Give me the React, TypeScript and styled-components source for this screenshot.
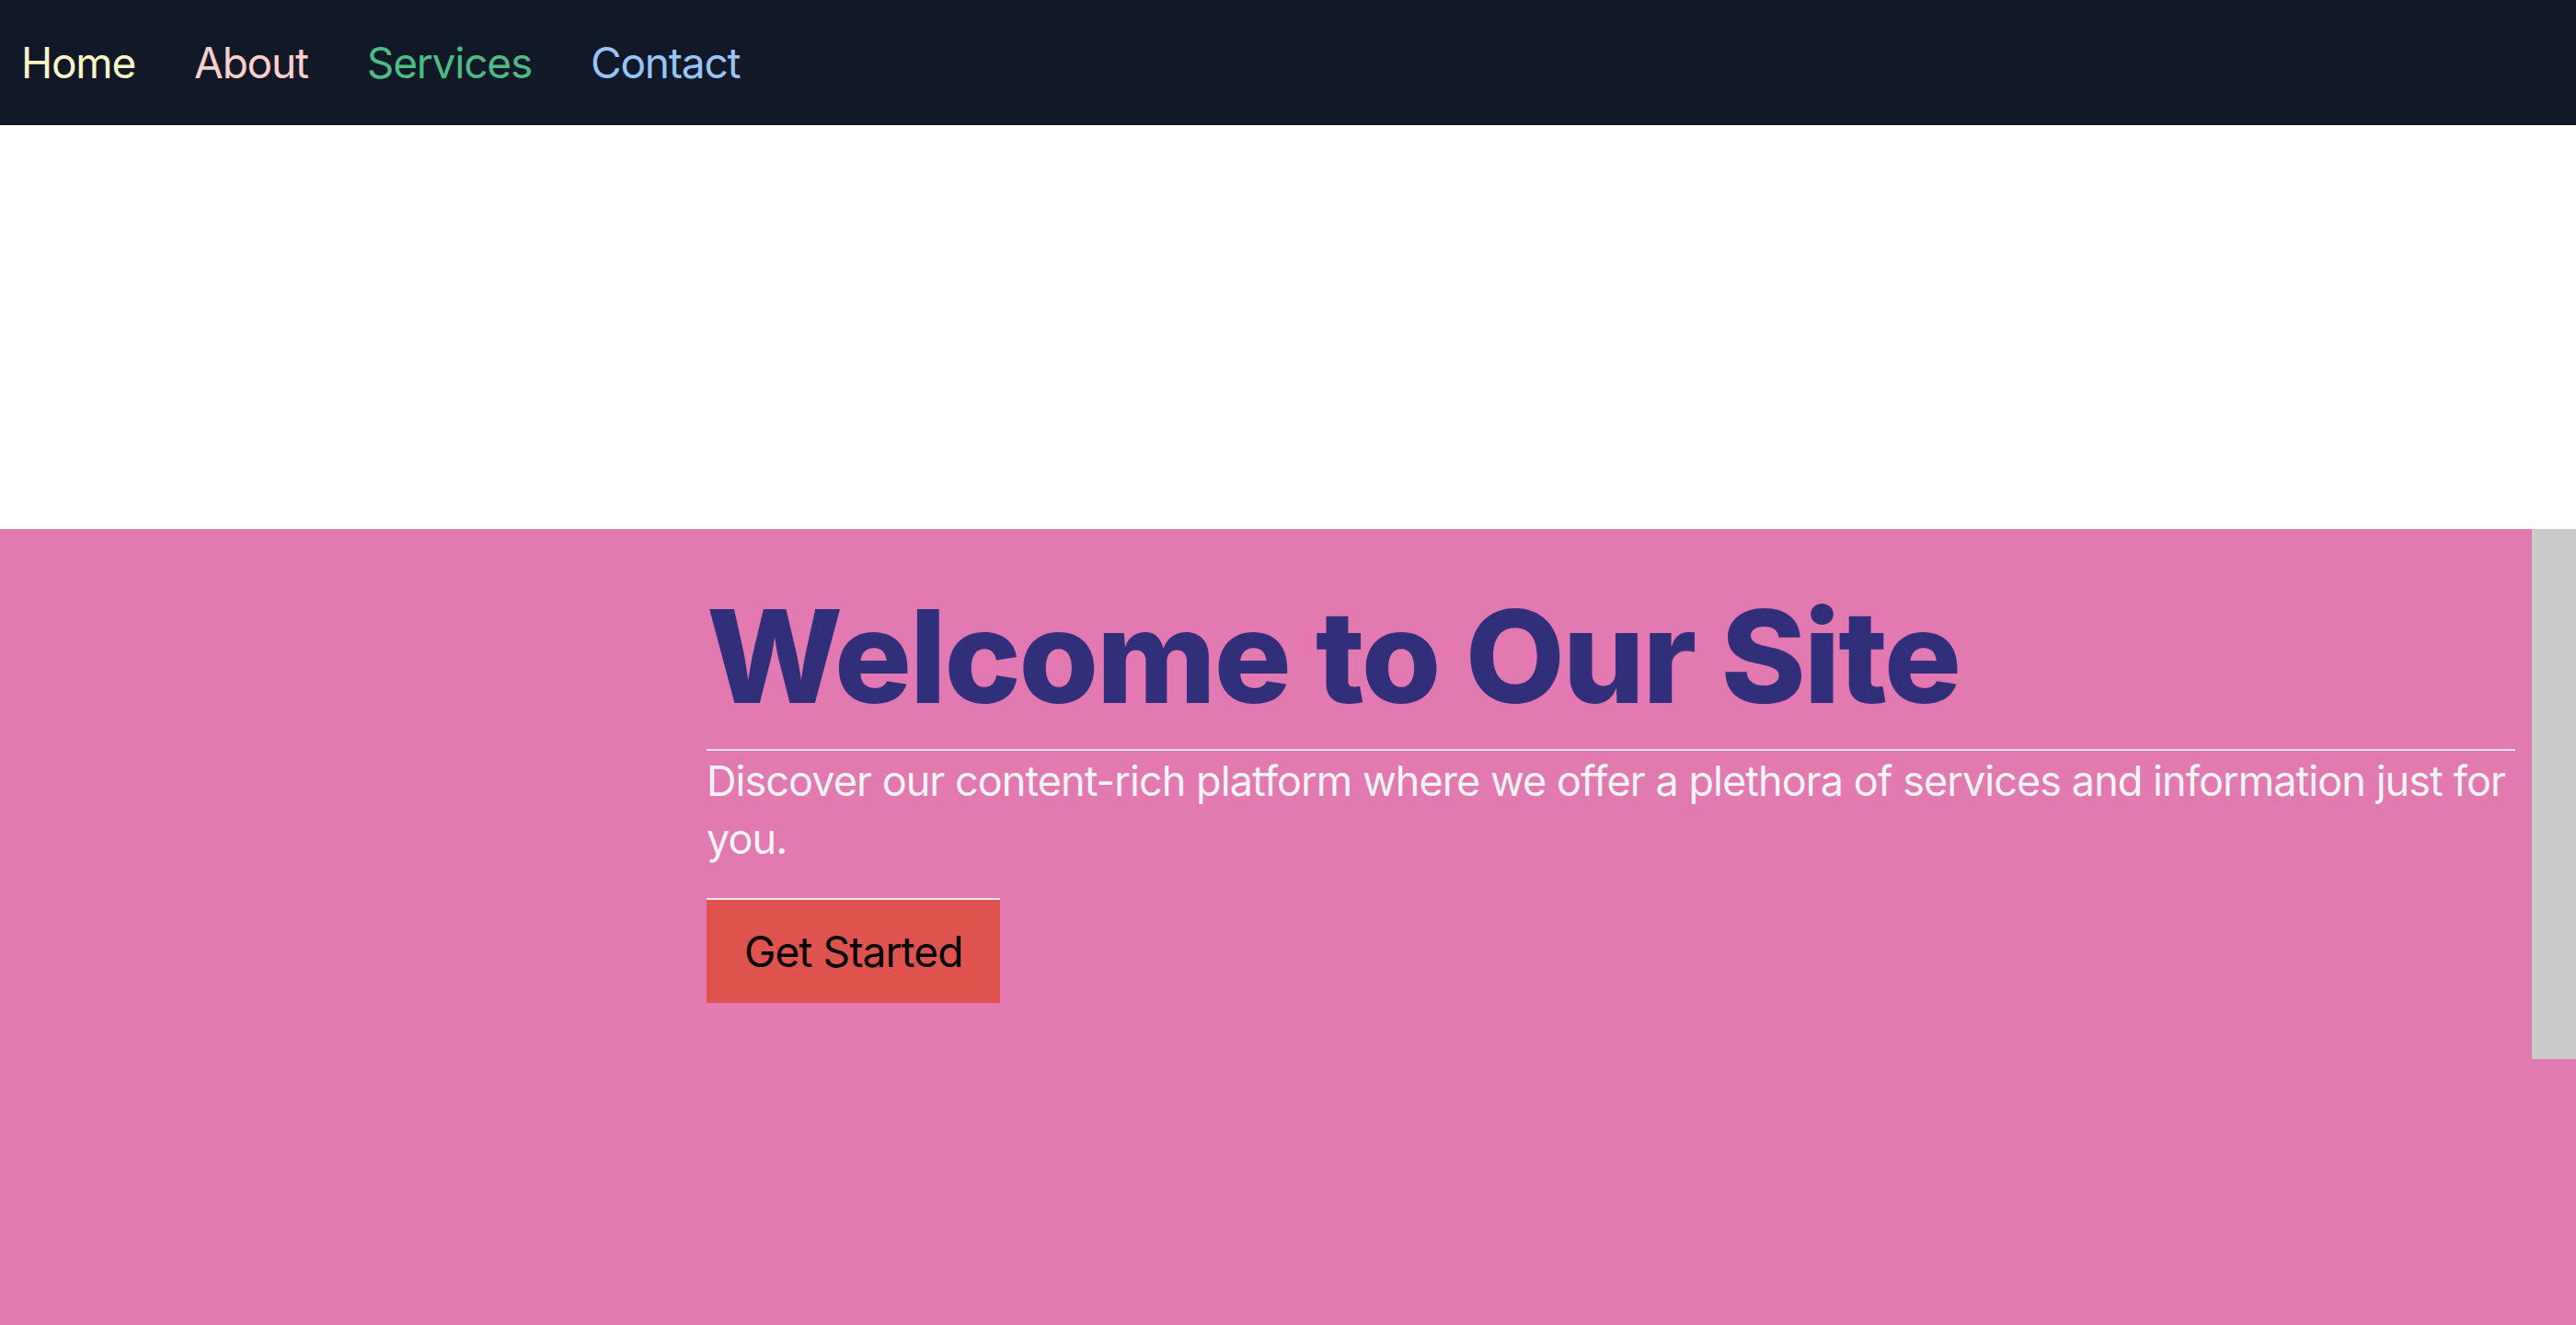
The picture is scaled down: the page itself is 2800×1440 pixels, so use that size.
import React from "react";
import styled, { createGlobalStyle } from "styled-components";

const GlobalStyle = createGlobalStyle`
	html, body {
		margin: 0;
		padding: 0;
		background: #ffffff;
		font-family: Inter, "Noto Sans", "Liberation Sans", sans-serif;
	}
	* {
		box-sizing: border-box;
	}
`;

const Navbar = styled.nav`
	height: 136px;
	background-color: #111827;
	display: flex;
	align-items: center;
	gap: 64px;
	padding: 0 23px;
`;

const NavLink = styled.a<{ $color: string }>`
	color: ${(props) => props.$color};
	font-size: 46px;
	letter-spacing: -1.2px;
	text-decoration: none;
	cursor: pointer;
`;

const Spacer = styled.div`
	height: 439px;
`;

const Hero = styled.section`
	background-color: #e279b0;
	min-height: 865px;
	display: flex;
	align-items: flex-start;
	padding-left: 768px;
`;

const HeroContent = styled.div`
	flex: 1;
	padding-top: 68px;
`;

const Title = styled.h1`
	margin: 0;
	font-size: 140px;
	line-height: 140px;
	font-weight: 800;
	letter-spacing: -2.2px;
	color: #312e7a;
	padding-bottom: 31px;
	border-bottom: 2px solid #e8e6ea;
`;

const Lead = styled.p`
	margin: 1px 0 0;
	font-size: 45px;
	line-height: 63px;
	letter-spacing: -0.95px;
	color: #f3f4f6;
`;

const CtaButton = styled.button`
	margin-top: 33px;
	font-family: inherit;
	font-size: 46px;
	letter-spacing: -0.9px;
	color: #000000;
	background-color: #de534d;
	border: none;
	border-top: 2px solid #e8e6ea;
	padding: 28px 41px;
	cursor: pointer;
`;

const SideBar = styled.aside`
	width: 48px;
	height: 576px;
	margin-left: 18px;
	background-color: #cbcbcb;
`;

const links = [
	{ label: "Home", color: "#fef6c8" },
	{ label: "About", color: "#fbcfcb" },
	{ label: "Services", color: "#4dbb82" },
	{ label: "Contact", color: "#98c4f8" },
];

export default function App() {
	return (
		<>
			<GlobalStyle />
			<Navbar>
				{links.map((link) => (
					<NavLink key={link.label} $color={link.color}>
						{link.label}
					</NavLink>
				))}
			</Navbar>
			<Spacer />
			<Hero>
				<HeroContent>
					<Title>Welcome to Our Site</Title>
					<Lead>
						Discover our content-rich platform where we offer a plethora of services and information just for
						you.
					</Lead>
					<CtaButton>Get Started</CtaButton>
				</HeroContent>
				<SideBar />
			</Hero>
		</>
	);
}
